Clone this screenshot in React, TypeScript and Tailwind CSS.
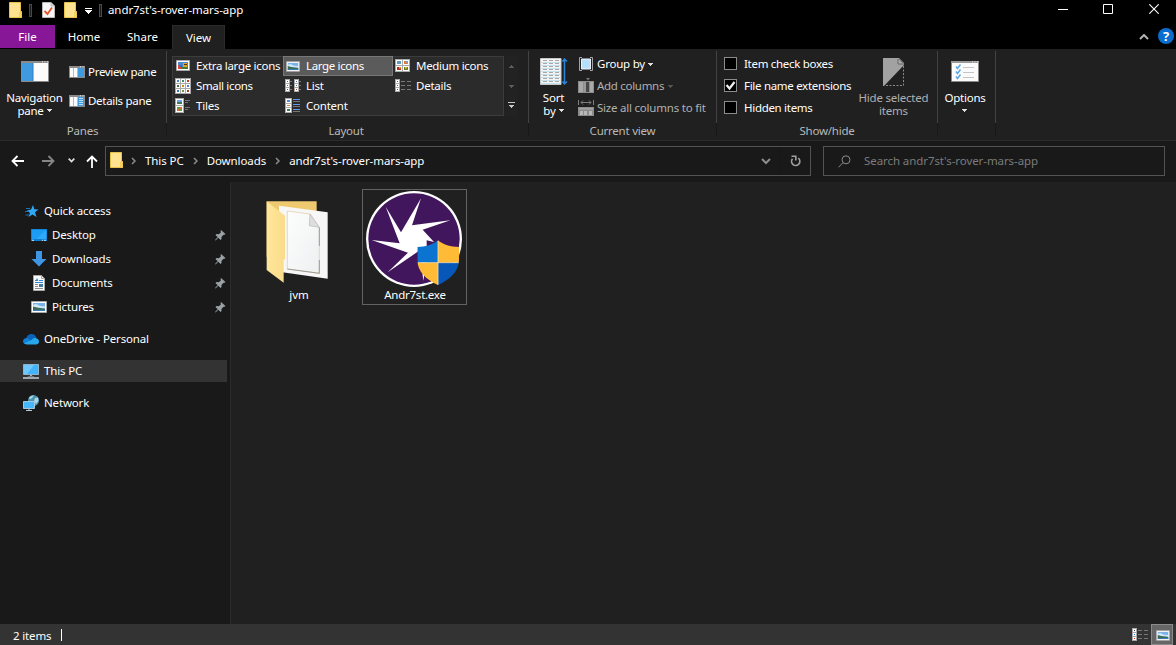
import React from "react";

type Kids = { children?: React.ReactNode };

const Svg = ({ w = 16, h = 16, box, children, className = "" }: Kids & { w?: number; h?: number; box?: string; className?: string }) => (
  <svg width={w} height={h} viewBox={box ?? `0 0 ${w} ${h}`} className={`shrink-0 ${className}`} fill="none">
    {children}
  </svg>
);

const Caret = ({ className = "text-[#dedede]" }: { className?: string }) => (
  <Svg w={5} h={3} className={className}>
    <path d="M0 0H5V1H4V2H3V3H2V2H1V1H0Z" fill="currentColor" />
  </Svg>
);

const FolderIcon = ({ w = 13, h = 16 }: { w?: number; h?: number }) => (
  <Svg w={w} h={h} box="0 0 13 16">
    <path d="M0.5 0.5H11.5V9.5H12.5V15.5H0.5Z" fill="#ffe390" stroke="#e8c34a" />
    <path d="M10.5 15V10.5L12.5 9.5V15.5Z" fill="#ffd75e" stroke="#e8c34a" strokeWidth=".6" />
  </Svg>
);

const PropertiesIcon = () => (
  <Svg w={13} h={16}>
    <path d="M.5 .5H9L12.5 4V15.5H.5Z" fill="#f6f6f6" stroke="#b8b8b8" />
    <path d="M9 .5V4H12.5" fill="#ddd" stroke="#aaa" strokeWidth=".7" />
    <path d="M2.5 9L5.5 12L10 5.5" stroke="#e4572e" strokeWidth="1.8" />
  </Svg>
);

const Handle = () => <div className="h-[13px] w-[3px] border border-[#4a4a4a] bg-[#1c1c1c]" />;

const TitleBar = () => (
  <div className="flex h-[25px] items-start bg-black">
    <div className="flex h-[20px] items-center pl-[9px]">
      <FolderIcon />
      <div className="w-[7px]" />
      <Handle />
      <div className="w-[10px]" />
      <PropertiesIcon />
      <div className="w-[9px]" />
      <FolderIcon />
      <div className="w-[8px]" />
      <Svg w={7} h={6} className="mt-[2px]">
        <path d="M0 .5H7" stroke="#fff" />
        <path d="M0 2H7V3H6V4H5V5H4V6H3V5H2V4H1V3H0Z" fill="#fff" />
      </Svg>
      <div className="w-[7px]" />
      <Handle />
      <span className="pl-[6px] tracking-[-0.08px]">andr7st's-rover-mars-app</span>
    </div>
    <div className="ml-auto flex pt-[4px] pr-[17px]">
      <Svg w={10} h={10} className="mr-[35px]">
        <path d="M0 5.5H10" stroke="#fff" />
      </Svg>
      <Svg w={10} h={10} className="mr-[36px]">
        <path d="M.5 .5H9.5V9.5H.5Z" stroke="#fff" />
      </Svg>
      <Svg w={10} h={10}>
        <path d="M.3 .3L9.7 9.7M9.7 .3L.3 9.7" stroke="#fff" strokeWidth="1.1" />
      </Svg>
    </div>
  </div>
);

const Tabs = () => (
  <div className="relative z-10 -mb-px flex h-[24px] items-stretch bg-black">
    <div className="flex h-[23px] w-[55px] items-center justify-center bg-[#881798]">File</div>
    <div className="flex h-[23px] w-[58px] items-center justify-center">Home</div>
    <div className="flex h-[23px] w-[59px] items-center justify-center">Share</div>
    <div className="flex h-[24px] w-[53px] items-center justify-center border border-b-0 border-[#2b2b2b] bg-[#202020]">View</div>
    <div className="ml-auto flex h-[23px] items-center pr-[2px]">
      <Svg w={10} h={6} className="mr-[9px]">
        <path d="M1 5L5 1L9 5" stroke="#b4b4b4" strokeWidth="2" />
      </Svg>
      <div className="-mt-px flex size-[16px] items-center justify-center rounded-full bg-[#0a6cce] text-[13px] font-bold leading-none">?</div>
    </div>
  </div>
);

const Separator = () => (
  <div className="w-px pt-[2px]">
    <div className="h-[72px] bg-[#434343]" />
    <div className="h-[14px] bg-[#181818]" />
  </div>
);

const PaneIcon = ({ kind }: { kind: "nav" | "preview" | "details" }) =>
  kind === "nav" ? (
    <Svg w={28} h={21}>
      <path d="M.5 .5H27.5V20.5H.5Z" fill="#fbfbfb" stroke="#8a8a8a" />
      <path d="M0 1H28" stroke="#8a8a8a" strokeWidth="2" />
      <path d="M21 .8H22M23.5 .8H24.5M26 .8H27" stroke="#eee" />
      <path d="M1 2H12V20H1Z" fill="#3f9ae0" />
      <path d="M12 2V20" stroke="#2f7fc4" />
    </Svg>
  ) : (
    <Svg w={16} h={12}>
      <path d="M.5 .5H15.5V11.5H.5Z" fill="#fbfbfb" stroke="#8a8a8a" />
      <path d="M0 1H16" stroke="#8a8a8a" strokeWidth="2" />
      <path d="M11 .8H12M13.5 .8H14.5" stroke="#eee" />
      <path d="M4.5 2V11M8.5 2V11" stroke="#bcbcbc" />
      <path d="M9 2H15V11H9Z" fill="#3f9ae0" />
      {kind === "details" && <path d="M10 3.5H14M10 5.5H14M10 7.5H14M10 9.5H14" stroke="#b9defa" />}
    </Svg>
  );

const Thumb = ({ w = 16, h = 12 }: { w?: number; h?: number }) => (
  <Svg w={w} h={h} box="0 0 16 12">
    <path d="M.5 .5H15.5V11.5H.5Z" fill="#fff" stroke="#a9a9a9" />
    <path d="M2 2H14V10H2Z" fill="#7bb2ea" />
    <path d="M2 4L5 3L9 5L14 5.5V7H2Z" fill="#d3e8f7" />
    <path d="M2 5.5L6 6.5L14 7.8V10H2Z" fill="#3c6b54" />
    <path d="M2 9L14 8.5V10H2Z" fill="#3e7cb4" />
  </Svg>
);

const ExtraLargeIcon = () => (
  <Svg w={16} h={16}>
    <path d="M1.5 2.5H14.5V12.5H1.5Z" fill="#fff" stroke="#a9a9a9" />
    <path d="M3 4H13V11H3Z" fill="#4b86d0" />
    <path d="M3 7H7V11H3Z" fill="#d34a35" />
    <path d="M5 7H7V9H5Z" fill="#3567c0" />
    <path d="M8 5H12V9H8Z" fill="#dda724" />
    <path d="M6 9H13V11H6Z" fill="#497a32" />
    <path d="M9 6H12V7H9Z" fill="#543410" />
  </Svg>
);

const DOTS = ["#4b82c8", "#3d8b72", "#c0392b", "#3f6d4a", "#c98c1a", "#4b82c8", "#3d75b8", "#6c9b38", "#b33a2a"];

const SmallIconsIcon = () => (
  <Svg>
    <path d="M0 0H16V16H0Z" fill="#a9a9a9" />
    {DOTS.map((c, i) => {
      const x = (i % 3) * 5 + 1;
      const y = Math.floor(i / 3) * 5 + 1;
      return (
        <g key={i} shapeRendering="crispEdges">
          <rect x={x} y={y} width="4" height="4" fill="#fff" />
          <rect x={x + 1} y={y + 1} width="2" height="2" fill={c} />
        </g>
      );
    })}
  </Svg>
);

const TilesIcon = () => (
  <Svg>
    <path d="M0 0H9V15H0Z" fill="#a9a9a9" />
    <path d="M1 1H8V7H1ZM1 8H8V14H1Z" fill="#fff" />
    <path d="M2 2H7V4H2Z" fill="#6ba5e8" />
    <path d="M2 4H7V6H2Z" fill="#44725c" />
    <path d="M2 9H7V13H2Z" fill="#5f9e3f" />
    <path d="M2 11H4V13H2ZM5 9H7V11H5Z" fill="#e0662f" />
    <path d="M10 2.5H15M10 4.5H13M10 9.5H15M10 11.5H13" stroke="#777" />
  </Svg>
);

const ListIcon = () => (
  <Svg>
    {[0, 9].map((x) => (
      <g key={x} shapeRendering="crispEdges">
        <rect x={x} y="1" width="5" height="13" fill="#a9a9a9" />
        <path d={`M${x + 1} 2h3v3h-3zM${x + 1} 6h3v3h-3zM${x + 1} 10h3v3h-3z`} fill="#fff" />
        <path d={`M${x + 2} 3h1v1h-1z`} fill="#3a67a8" />
        <path d={`M${x + 2} 7h1v1h-1z`} fill="#3d7d4a" />
        <path d={`M${x + 2} 11h1v1h-1z`} fill="#c0392b" />
        <path d={`M${x + 5} 3.5h2M${x + 5} 7.5h2M${x + 5} 11.5h2`} stroke="#777" />
      </g>
    ))}
  </Svg>
);

const ContentIcon = () => (
  <Svg>
    <path d="M0 0H7V15H0Z" fill="#a9a9a9" />
    <path d="M1 1H6V5H1ZM1 6H6V9H1ZM1 10H6V14H1Z" fill="#fff" />
    <path d="M2 2H5V4H2Z" fill="#4f8bd4" />
    <path d="M2 7H5V8H2Z" fill="#c78b20" />
    <path d="M2 11H5V13H2Z" fill="#3c7a50" />
    <path d="M8 1.5H15M8 6.5H15M8 11.5H15" stroke="#5f9bee" />
    <path d="M8 3.5H15M8 8.5H15M8 13.5H15" stroke="#777" />
  </Svg>
);

const MediumIcon = () => (
  <Svg>
    <path d="M0 1H15V14H0Z" fill="#a9a9a9" />
    <path d="M1 2H7V7H1ZM8 2H14V7H8ZM1 8H7V13H1ZM8 8H14V13H8Z" fill="#fff" />
    <path d="M2 3H6V6H2Z" fill="#5e9bc0" />
    <path d="M9 3H13V6H9Z" fill="#dd7b3e" />
    <path d="M10 3H13V4.5H10Z" fill="#6f9de0" />
    <path d="M2 9H6V12H2Z" fill="#b92b1a" />
    <path d="M4 9H6V10.5H4Z" fill="#e5932c" />
    <path d="M9 9H13V12H9Z" fill="#6f7a20" />
    <path d="M10 9H12V10.5H10Z" fill="#e2b93b" />
  </Svg>
);

const DetailsIcon = ({ dots = ["#b33a2a", "#3a67a8", "#b33a2a"] }: { dots?: string[] }) => (
  <Svg>
    <path d="M0 1H5V14H0Z" fill="#a9a9a9" />
    <path d="M1 2H4V5H1ZM1 6H4V9H1ZM1 10H4V13H1Z" fill="#fff" />
    {dots.map((c, i) => (
      <rect key={i} x="2" y={3 + i * 4} width="1" height="1" fill={c} />
    ))}
    <path d="M6 3.5H10M12 3.5H16M6 7.5H10M12 7.5H16M6 11.5H10M12 11.5H16" stroke="#777" />
  </Svg>
);

const LargeIcon = () => (
  <div className="w-[16px] pl-px">
    <Thumb w={14} h={11} />
  </div>
);

const GalleryItem = ({ icon, children, selected }: Kids & { icon: React.ReactNode; selected?: boolean }) => (
  <div className={`flex h-[20px] items-center gap-[5px] border pl-px ${selected ? "border-[#777] bg-[#5b5b5b]" : "border-transparent"}`}>
    {icon}
    <span className="whitespace-nowrap">{children}</span>
  </div>
);

const GroupLabel = ({ children }: Kids) => <div className="h-[16px] text-center leading-4 text-[#b9b9b9]">{children}</div>;

const CheckBox = ({ label, checked }: { label: string; checked?: boolean }) => (
  <div className="flex h-[22px] items-center gap-[7px]">
    <div className="-mt-px flex size-[13px] items-center justify-center border border-[#8c8c8c] bg-black">
      {checked && (
        <Svg w={11} h={11}>
          <path d="M1.5 5L4.5 8.5L9.5 2" stroke="#f0f0f0" strokeWidth="2.2" />
        </Svg>
      )}
    </div>
    <span className="whitespace-nowrap tracking-[-0.3px]">{label}</span>
  </div>
);

const SortIcon = () => (
  <Svg w={28} h={28}>
    <path d="M.5 .5H21V26.5H.5Z" fill="#f4f4f4" stroke="#c8c8c8" />
    {[3, 6, 9, 12, 15, 18, 21, 24].map((y) => (
      <g key={y}>
        <path d={`M1 ${y + 1.5}H20.5`} stroke="#c4e1ee" />
        <path d={`M3 ${y - 0.5}H7M9 ${y - 0.5}H13M15 ${y - 0.5}H19`} stroke="#a8a8a8" />
      </g>
    ))}
    <path d="M24.5 1V26M22.5 3.5L24.5 1L27 3.5M22.5 23.5L24.5 26L27 23.5" stroke="#2b86d9" strokeWidth="1.5" />
  </Svg>
);

const GroupByIcon = () => (
  <Svg>
    <path d="M4 1.5H1.5V14.5H4M12 1.5H14.5V14.5H12" stroke="#a5a5a5" />
    <path d="M3.5 3H12.5V13H3.5Z" fill="#b7dffb" stroke="#e9f5fd" />
  </Svg>
);

const AddColumnsIcon = () => (
  <Svg>
    <path d="M8 0H12L10 2.5Z" fill="#777" />
    <path d="M0 3H16V15H0Z" fill="#8c8c8c" />
    <path d="M1 4H5V14H1ZM12 4H15V14H12Z" fill="#a9a9a9" />
    <path d="M6 4H8V14H6Z" fill="#999" />
    <path d="M8 4H11V14H8Z" fill="#474747" />
  </Svg>
);

const SizeColumnsIcon = () => (
  <Svg>
    <path d="M.5 0V5M15.5 0V5M3 2.5H13M5 .5L3 2.5L5 4.5M11 .5L13 2.5L11 4.5" stroke="#7d7d7d" />
    <path d="M0 7H16V16H0Z" fill="#8c8c8c" />
    <path d="M1 8H15V9.500H1Z" fill="#a5a5a5" />
    <path d="M2 11H5V15H2ZM6 11H9V15H6ZM11 11H14V15H11Z" fill="#b9b9b9" />
  </Svg>
);

const HideIcon = () => (
  <Svg w={22} h={28}>
    <path d="M0 0H16L21 5V7L1 28H0Z" fill="#a2a2a2" />
    <path d="M15 1V6H21" fill="#aaa" stroke="#686868" />
    <path d="M16 1L20 5" stroke="#707070" />
    <path d="M20.5 8V27.5H2" stroke="#8a8a8a" strokeDasharray="2 1.5" />
  </Svg>
);

const OptionsIcon = () => (
  <Svg w={28} h={21}>
    <path d="M.5 .5H27.5V20.5H.5Z" fill="#fbfbfb" stroke="#8a8a8a" />
    <path d="M0 1H28" stroke="#999" strokeWidth="2" />
    <path d="M21 .8H22M23.5 .8H24.5M26 .8H27" stroke="#eee" />
    {[5.5, 10.5, 15.5].map((y) => (
      <g key={y}>
        <path d={`M5 ${y}L6.5 ${y + 2}L9.5 ${y - 2}`} stroke="#5ba6e6" strokeWidth="1.5" />
        <path d={`M12 ${y + 1}H23`} stroke="#c5c5c5" />
      </g>
    ))}
  </Svg>
);

const Ribbon = () => (
  <div className="flex h-[93px] border-y border-[#2b2b2b] bg-[#202020] tracking-[-0.22px]">
    <div className="flex w-[166px] flex-col">
      <div className="flex h-[74px]">
        <div className="flex w-[69px] flex-col items-center pt-[12px]">
          <PaneIcon kind="nav" />
          <div className="h-[9px]" />
          <span className="leading-[13px]">Navigation</span>
          <span className="flex items-center gap-[3px] leading-[13px]">pane <Caret /></span>
        </div>
        <div className="flex flex-col gap-[13px] pt-[15px] tracking-[-0.3px]">
          <div className="flex h-4 items-center gap-[3px]"><PaneIcon kind="preview" />Preview pane</div>
          <div className="flex h-4 items-center gap-[3px]"><PaneIcon kind="details" />Details pane</div>
        </div>
      </div>
      <GroupLabel><span className="-ml-px">Panes</span></GroupLabel>
    </div>
    <Separator />
    <div className="flex w-[361px] flex-col pl-[5px]">
      <div className="flex h-[74px] pt-[7px]">
        <div className="grid h-[60px] w-[332px] grid-cols-[111px_110px_111px] grid-rows-[20px_20px_20px] bg-[#2b2b2b] shadow-[inset_0_0_0_1px_#3c3c3c]">
          <GalleryItem icon={<div className="pl-px"><ExtraLargeIcon /></div>}><span className="tracking-[-0.3px]">Extra large icons</span></GalleryItem>
          <GalleryItem icon={<LargeIcon />} selected><span className="tracking-[-0.35px]">Large icons</span></GalleryItem>
          <GalleryItem icon={<MediumIcon />}><span className="tracking-[-0.3px]">Medium icons</span></GalleryItem>
          <GalleryItem icon={<div className="pl-px"><SmallIconsIcon /></div>}><span className="tracking-[-0.35px]">Small icons</span></GalleryItem>
          <GalleryItem icon={<ListIcon />}>List</GalleryItem>
          <GalleryItem icon={<DetailsIcon />}>Details</GalleryItem>
          <GalleryItem icon={<div className="pl-px"><TilesIcon /></div>}>Tiles</GalleryItem>
          <GalleryItem icon={<ContentIcon />}>Content</GalleryItem>
        </div>
        <div className="ml-px flex h-[60px] w-[13px] flex-col items-center bg-[#222] pt-[9px]">
          <Svg w={5} h={3}><path d="M0 3H5V2H4V1H3V0H2V1H1V2H0Z" fill="#5c5c5c" /></Svg>
          <Svg w={5} h={3} className="mt-[17px]"><path d="M0 0H5V1H4V2H3V3H2V2H1V1H0Z" fill="#5c5c5c" /></Svg>
          <Svg w={7} h={6} className="mt-[14px]"><path d="M0 0H7V1H0ZM1 3H6V4H5V5H4V6H3V5H2V4H1Z" fill="#c8c8c8" /></Svg>
        </div>
      </div>
      <GroupLabel><span className="-ml-[8px]">Layout</span></GroupLabel>
    </div>
    <Separator />
    <div className="flex w-[187px] flex-col">
      <div className="flex h-[74px]">
        <div className="flex w-[49px] flex-col items-center pt-[9px]">
          <SortIcon />
          <div className="h-[5px]" />
          <span className="leading-[13px]">Sort</span>
          <span className="flex items-center gap-[3px] leading-[13px]">by <Caret /></span>
        </div>
        <div className="flex flex-col pt-[4px] text-[#b0b0b0]">
          <div className="flex h-[22px] items-center gap-[3px] text-white"><GroupByIcon />Group by<Caret /></div>
          <div className="flex h-[22px] items-center gap-[3px]"><AddColumnsIcon /><span className="tracking-[-0.3px]">Add columns</span><Caret className="ml-px text-[#555]" /></div>
          <div className="flex h-[22px] items-center gap-[3px] whitespace-nowrap"><SizeColumnsIcon />Size all columns to fit</div>
        </div>
      </div>
      <GroupLabel>Current view</GroupLabel>
    </div>
    <Separator />
    <div className="flex w-[220px] flex-col">
      <div className="flex h-[74px]">
        <div className="flex w-[139px] flex-col pl-[7px] pt-[4px]">
          <CheckBox label="Item check boxes" />
          <CheckBox label="File name extensions" checked />
          <CheckBox label="Hidden items" />
        </div>
        <div className="flex w-[75px] flex-col items-center pt-[9px] text-[#b0b0b0]">
          <HideIcon />
          <div className="h-[5px]" />
          <span className="whitespace-nowrap leading-[13px]">Hide selected</span>
          <span className="leading-[13px]">items</span>
        </div>
      </div>
      <GroupLabel>Show/hide</GroupLabel>
    </div>
    <Separator />
    <div className="flex w-[57px] flex-col items-center pt-[12px] pr-[3px]">
      <OptionsIcon />
      <div className="h-[9px]" />
      <span className="leading-[13px]">Options</span>
      <Caret className="mr-px mt-[5px] text-[#dedede]" />
    </div>
    <Separator />
  </div>
);

const Chevron = () => (
  <Svg w={5} h={8}>
    <path d="M1 1L4 4L1 7" stroke="#8c8c8c" strokeWidth="1.5" />
  </Svg>
);

const AddressRow = () => (
  <div className="flex h-[41px] items-start bg-[#191919] pt-[5px] tracking-[-0.08px]">
    <div className="flex h-[30px] w-[105px] items-center pl-[11px]">
      <Svg w={13} h={12}><path d="M13 6H1.5M6.5 1L1.5 6L6.5 11" stroke="#fff" strokeWidth="1.8" /></Svg>
      <Svg w={13} h={12} className="ml-[18px]"><path d="M0 6H11.5M6.5 1L11.5 6L6.5 11" stroke="#868686" strokeWidth="1.8" /></Svg>
      <Svg w={7} h={5} className="ml-[13px] -mt-[2px]"><path d="M.7 .7L3.5 3.5L6.3 .7" stroke="#e0e0e0" strokeWidth="1.7" /></Svg>
      <Svg w={12} h={13} className="ml-[11px] mt-px"><path d="M6 13V1.5M1 6.5L6 1.5L11 6.5" stroke="#fff" strokeWidth="1.8" /></Svg>
    </div>
    <div className="flex h-[30px] w-[706px] items-center border border-[#535353] pl-[4px]">
      <div className="-mt-[2px]"><FolderIcon /></div>
      <div className="ml-[8px] mr-[9px]"><Chevron /></div>
      <span>This PC</span>
      <div className="ml-[9px] mr-[9px]"><Chevron /></div>
      <span>Downloads</span>
      <div className="ml-[9px] mr-[9px]"><Chevron /></div>
      <span>andr7st's-rover-mars-app</span>
      <Svg w={10} h={7} className="ml-auto"><path d="M1 1L5 5L9 1" stroke="#8c8c8c" strokeWidth="2" /></Svg>
      <div className="ml-[8px] h-[28px] w-px bg-[#161616]" />
      <Svg w={11} h={12} className="ml-[10px] mr-[9px]">
        <path d="M8.3 3.2A4.100 4.100 0 1 1 2.5 3.8" stroke="#a0a0a0" strokeWidth="1.700" />
        <path d="M1.500 1.300H5.800V5.500" stroke="#a0a0a0" strokeWidth="1.600" />
      </Svg>
    </div>
    <div className="ml-[12px] flex h-[30px] w-[342px] items-center border border-[#535353] pl-[14px] text-[#7b7b7b]">
      <Svg w={13} h={13}>
        <circle cx="8" cy="4.800" r="4" stroke="#8a8a8a" />
        <path d="M5 7.700L.5 12.300" stroke="#8a8a8a" />
      </Svg>
      <span className="ml-[13px]">Search andr7st's-rover-mars-app</span>
    </div>
  </div>
);

const Pin = () => (
  <Svg w={11} h={11} className="ml-auto mr-px">
    <path d="M6 0L10.500 4L9 5L8.500 4.800L6.500 7L6.500 9L5.500 10L3.300 7.800L.5 10.500L0 10L2.700 7.200L.5 5L1.500 4L3.800 4.200L6 2.200L5.500 1Z" fill="#98a1a6" />
  </Svg>
);

const StarIcon = () => (
  <Svg w={14} h={13}>
    <path d="M8 0L9.300 4.200L13.500 4.500L10 7.300L11.500 12L7.500 9.500L3.500 12L5 8L2 5.500L6 4.500Z" fill="#2fa8f5" />
    <path d="M1 3.500H5M0 6.500H4M.5 10H4" stroke="#1676b8" />
  </Svg>
);

const DesktopIcon = () => (
  <Svg w={16} h={12}>
    <path d="M0 0H16V12H0Z" fill="#0c7cd0" />
    <path d="M.7 .7H15.300V10H.7Z" fill="#1c9cf4" />
    <path d="M15.300 .7V10H5Z" fill="#2fa9fa" />
    <path d="M1 11.300H3M11 11.300H12M13 11.300H15" stroke="#fff" strokeWidth=".8" />
  </Svg>
);

const DownloadIcon = () => (
  <Svg>
    <path d="M5 0H11V8H15.500L8 15.500L.5 8H5Z" fill="#3e97e4" />
  </Svg>
);

const DocumentIcon = () => (
  <Svg w={12} h={16}>
    <path d="M.5 .5H8.500L11.500 3.500V15.500H.5Z" fill="#fafafa" stroke="#a8a8a8" />
    <path d="M8.500 .5V3.500H11.500" stroke="#a8a8a8" />
    <path d="M2 5.500H5M6 5.500H10M2 7.500H10" stroke="#2b86d9" />
    <path d="M4 3L3 5H5Z" fill="#2b86d9" />
    <path d="M2 9.500H5M2 11.500H5M2 13.500H10" stroke="#8b8b8b" />
    <path d="M6 9H10V12H6Z" fill="#4579a0" />
  </Svg>
);

const CloudIcon = () => (
  <Svg w={16} h={11}>
    <path d="M3 6C3 2 6 0 8.500 0C11 0 12.500 1.500 13.500 4L8 8Z" fill="#0a64b8" />
    <path d="M0 7.500C0 5 2 3.500 4.500 4L12 10H3.500C1.500 10 0 9 0 7.500Z" fill="#0f7fd7" />
    <path d="M8.500 6C10 3.500 13 3.500 14 4.500C16 5 16 7.500 16 8C16 9.500 14.500 10.500 13 10.500H4C2.500 10.500 1.500 10 1 9.300Z" fill="#28a8ea" />
  </Svg>
);

const PcIcon = () => (
  <Svg w={16} h={15}>
    <path d="M.5 .5H15.500V10.500H.5Z" fill="#42b4fb" stroke="#8eb4cc" />
    <path d="M1 1H11L4 10H1Z" fill="#71c8fc" />
    <path d="M7 11H9V12H7ZM5 12H11V12.500H5Z" fill="#9db0bd" />
    <path d="M0 14H16" stroke="#c6d1db" strokeWidth="1.500" />
  </Svg>
);

const NetworkIcon = () => (
  <Svg>
    <circle cx="10.500" cy="5.500" r="5.500" fill="#4c91ac" />
    <path d="M6 3C7 1 9 .5 11 .5L9 3L7 4.500ZM12 3L15 2.500L15.500 6L13 9L11 6Z" fill="#a9d7e5" />
    <path d="M.5 6.500H11.500V13.500H.5Z" fill="#47b8fb" stroke="#a1c8dc" />
    <path d="M6 14V15M3 15.500H9" stroke="#b6c9d6" />
  </Svg>
);

const NavItem = ({ icon, label, pinned, root, selected }: { icon: React.ReactNode; label: string; pinned?: boolean; root?: boolean; selected?: boolean }) => (
  <div className="flex h-[24px] items-center">
    <div className={`flex h-[22px] w-[227px] items-center gap-[5px] ${root ? "pl-[23px]" : "pl-[31px]"} ${selected ? "bg-[#333333]" : ""}`}>
      <div className="flex w-[16px] justify-center">{icon}</div>
      <span>{label}</span>
      {pinned && <Pin />}
    </div>
  </div>
);

const Sidebar = () => (
  <div className="flex w-[231px] flex-col border-r border-[#2b2b2b] bg-[#191919] pt-[17px] tracking-[-0.16px]">
    <NavItem root icon={<div className="pl-[2px]"><StarIcon /></div>} label="Quick access" />
    <NavItem icon={<DesktopIcon />} label="Desktop" pinned />
    <NavItem icon={<DownloadIcon />} label="Downloads" pinned />
    <NavItem icon={<DocumentIcon />} label="Documents" pinned />
    <NavItem icon={<Thumb />} label="Pictures" pinned />
    <div className="h-[8px]" />
    <NavItem root icon={<CloudIcon />} label="OneDrive - Personal" />
    <div className="h-[8px]" />
    <NavItem root selected icon={<PcIcon />} label="This PC" />
    <div className="h-[8px]" />
    <NavItem root icon={<NetworkIcon />} label="Network" />
  </div>
);

const JvmFolder = () => (
  <Svg w={63} h={84} box="48 60 189 252">
    <defs>
      <linearGradient id="flap" x1="0" y1="0" x2="1" y2="0">
        <stop offset="0" stopColor="#ffe69b" />
        <stop offset="1" stopColor="#fadc8a" />
      </linearGradient>
      <linearGradient id="sheet" x1="0" y1="0" x2="1" y2="1">
        <stop offset="0" stopColor="#fdfdfd" />
        <stop offset="1" stopColor="#eef0f1" />
      </linearGradient>
    </defs>
    <path d="M50 64H200V230H50Z" fill="#eec96f" />
    <path d="M87 77L233 97V296L87 275Z" fill="#f7f7f7" />
    <path d="M112 93L180 102L208 142V280L112 267Z" fill="url(#sheet)" stroke="#dcc9a0" strokeWidth="2" />
    <path d="M208 142V198M208 240V280L112 267" stroke="#8d8d8d" strokeWidth="2.500" />
    <path d="M180 102L208 142L178 137Z" fill="#dedede" stroke="#b5b5b5" strokeWidth="2" />
    <path d="M50 64L105 107V236L101 240V308L50 270Z" fill="url(#flap)" />
  </Svg>
);

const Andr7stIcon = () => (
  <Svg w={98} h={98} box="345 30 294 294" className="-ml-[2px]">
    <defs>
      <clipPath id="shield">
        <path d="M564 181C550 194 525 201 502 201V240C502 275 530 300 564 315C598 300 627 275 627 240V201C603 201 578 194 564 181Z" />
      </clipPath>
    </defs>
    <circle cx="492" cy="177" r="144" fill="#fff" />
    <circle cx="492" cy="177" r="137" fill="#41165d" />
    <path d="M407 80L453 157L513 55L486 136L601 121L518 149L552 186L530 181V240L520 302L512 235L505 214L413 277L474 218L365 180L449 190Z" fill="#fff" />
    <g clipPath="url(#shield)">
      <path d="M500 178H564V248H500Z" fill="#0a74d0" />
      <path d="M564 178H630V248H564Z" fill="#ffbb36" />
      <path d="M500 248H564V318H500Z" fill="#ffbb36" />
      <path d="M564 248H630V318H564Z" fill="#0757b8" />
      <path d="M564 178V318M500 248H630" stroke="#f3dfb0" strokeWidth="2.500" />
    </g>
  </Svg>
);

const StatusBar = () => (
  <div className="flex h-[21px] items-center bg-[#333333] pl-[13px]">
    <span className="mt-[2px] tracking-[-0.15px]">2 items</span>
    <div className="ml-[10px] mt-px h-[12px] w-px bg-white" />
    <div className="ml-auto flex h-full items-center">
      <div className="pt-px pr-[3px]"><DetailsIcon dots={["#333", "#3a7be0", "#d02020"]} /></div>
      <div className="flex h-[21px] w-[22px] items-center justify-center border border-[#8a8a8a] bg-[#666] pl-[2px] pt-[2px]"><Thumb w={14} h={11} /></div>
      <div className="w-[3px]" />
    </div>
  </div>
);

export default function App() {
  return (
    <div className="flex h-[645px] w-[1176px] flex-col overflow-hidden bg-[#202020] font-['Noto_Sans','Open_Sans',sans-serif] text-[11.5px] leading-4 text-white">
      <TitleBar />
      <Tabs />
      <Ribbon />
      <AddressRow />
      <div className="flex h-[442px]">
        <Sidebar />
        <div className="flex flex-1 items-start pt-[7px]">
          <div className="ml-[16px] flex w-[104px] flex-col items-center pt-[11px]">
            <div className="-ml-[3px]"><JvmFolder /></div>
            <span className="mt-[3px]">jvm</span>
          </div>
          <div className="ml-[11px] flex h-[116px] w-[105px] flex-col items-center border border-[#636363]">
            <Andr7stIcon />
            <span className="-mt-px pl-px tracking-[-0.25px]">Andr7st.exe</span>
          </div>
        </div>
      </div>
      <StatusBar />
    </div>
  );
}
